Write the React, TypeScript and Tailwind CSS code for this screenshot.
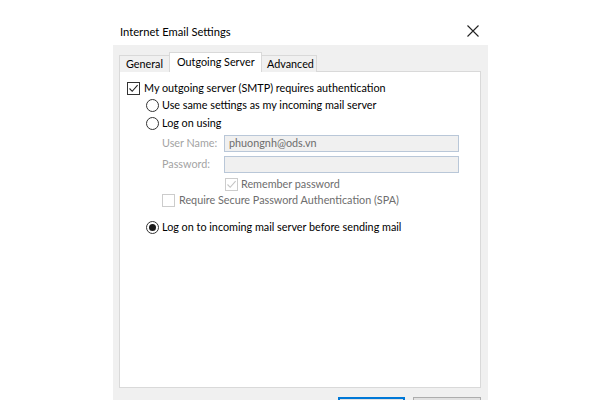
import React from "react";

const Check = ({ disabled = false, checked = false }: { disabled?: boolean; checked?: boolean }) => (
  <span
    className={`flex h-[13px] w-[13px] shrink-0 items-center justify-center border ${
      disabled ? "border-[#cccccc] bg-white" : "border-[#333333] bg-white"
    }`}
  >
    {checked && (
      <svg width="11" height="11" viewBox="0 0 11 11">
        <path
          d="M1.5 5.5 L4.2 8.3 L9.6 2.2"
          fill="none"
          stroke={disabled ? "#c4c4c4" : "#222222"}
          strokeWidth="1.1"
        />
      </svg>
    )}
  </span>
);

const Radio = ({ selected = false }: { selected?: boolean }) => (
  <span className="flex h-[13px] w-[13px] shrink-0 items-center justify-center rounded-full border border-[#333333] bg-white">
    {selected && <span className="h-[7px] w-[7px] rounded-full bg-[#1a1a1a]" />}
  </span>
);

export default function App() {
  return (
    <div
      className="h-[400px] w-[600px] overflow-hidden whitespace-nowrap bg-white text-[10.8px] text-black"
      style={{ fontFamily: 'Lato, "Noto Sans", sans-serif' }}
    >
      {/* title bar */}
      <div className="flex h-[45px] items-start justify-between pl-[120px] pr-[121px] pt-[24px]">
        <span className="text-[11.2px] leading-[15px] text-black">Internet Email Settings</span>
        <svg width="12" height="12" viewBox="0 0 12 12" className="mt-[1px]">
          <path d="M0.5 0.5 L11.5 11.5 M11.5 0.5 L0.5 11.5" stroke="#222" strokeWidth="1.1" />
        </svg>
      </div>

      {/* dialog body */}
      <div className="ml-[113px] h-[355px] w-[375px] bg-[#f0f0f0] px-[6px] pt-[7px]">
        {/* tabs */}
        <div className="relative z-10 -mb-px flex h-[20px] items-end">
          <div className="flex h-[17px] w-[50px] items-center border border-r-0 border-b-0 border-[#d9d9d9] bg-[#f0f0f0] pl-[6px] leading-none">
            General
          </div>
          <div className="flex h-[20px] w-[93px] items-start border border-b-0 border-[#d9d9d9] bg-white pl-[7px] pt-[2px] leading-[14px]">
            Outgoing Server
          </div>
          <div className="flex h-[17px] w-[55px] items-center border border-l-0 border-b-0 border-[#d9d9d9] bg-[#f0f0f0] pl-[5px] leading-none">
            Advanced
          </div>
        </div>

        {/* tab panel */}
        <div className="h-[317px] w-[362px] border border-[#d9d9d9] bg-white pl-[7px] pt-[9px]">
          <div className="flex h-[14px] items-center gap-[4px]">
            <Check checked />
            <span>My outgoing server (SMTP) requires authentication</span>
          </div>

          <div className="ml-[19px] mt-[3px]">
            <div className="flex h-[14px] items-center gap-[3px]">
              <Radio />
              <span>Use same settings as my incoming mail server</span>
            </div>
            <div className="mt-[4px] flex h-[14px] items-center gap-[3px]">
              <Radio />
              <span>Log on using</span>
            </div>

            <div className="ml-[16px] mt-[5px] text-[#a3a3a3]">
              <div className="flex h-[17px] items-center">
                <span className="w-[62px]">User Name:</span>
                <div className="flex h-[17px] w-[235px] items-center border border-[#b9c7d8] bg-[#f0f0f0] pl-[4px] text-[#6d6d6d]">
                  phuongnh@ods.vn
                </div>
              </div>
              <div className="mt-[4px] flex h-[17px] items-center">
                <span className="w-[62px]">Password:</span>
                <div className="h-[17px] w-[235px] border border-[#b9c7d8] bg-[#f0f0f0]" />
              </div>
              <div className="ml-[63px] mt-[4px] flex h-[14px] items-center gap-[3px] text-[#6d6d6d]">
                <Check disabled checked />
                <span>Remember password</span>
              </div>
              <div className="mt-[2px] flex h-[14px] items-center gap-[4px] text-[#6d6d6d]">
                <Check disabled />
                <span>Require Secure Password Authentication (SPA)</span>
              </div>
            </div>

            <div className="mt-[13px] flex h-[14px] items-center gap-[3px]">
              <Radio selected />
              <span>Log on to incoming mail server before sending mail</span>
            </div>
          </div>
        </div>

        {/* buttons */}
        <div className="mt-[9px] flex justify-end gap-[8px] pr-[1px]">
          <div className="h-[23px] w-[67px] border-2 border-[#0078d7] bg-[#e1e1e1]" />
          <div className="h-[23px] w-[68px] border border-[#adadad] bg-[#e1e1e1]" />
        </div>
      </div>
    </div>
  );
}
